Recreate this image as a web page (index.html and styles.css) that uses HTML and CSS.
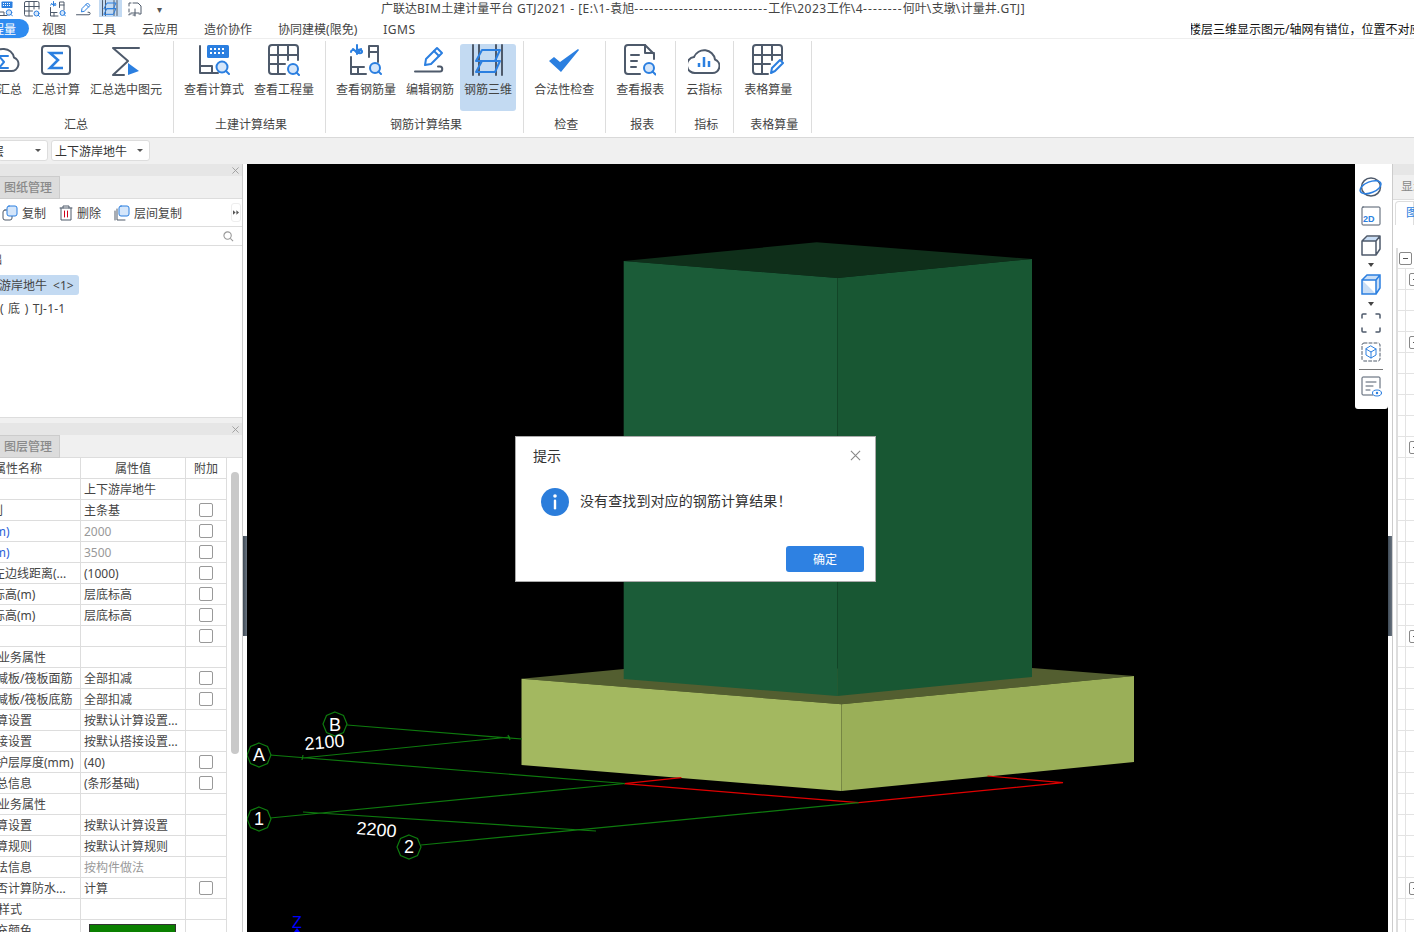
FILE: index.html
```html
<!DOCTYPE html>
<html lang="zh-CN">
<head>
<meta charset="utf-8">
<title>GTJ2021</title>
<link rel="stylesheet" href="styles.css">
</head>
<body>
<svg class="sprite" xmlns="http://www.w3.org/2000/svg">
  <symbol id="i-calc" viewBox="0 0 32 32"><path class="sl" d="M2 2V29H20M2 22H14V29"/><rect class="bf" x="9" y="1" width="22" height="13" rx="1.5"/><path class="dots" d="M12 5h16M12 9h16"/><circle class="lens" cx="24" cy="23" r="5.5"/><path class="bl" d="M28 27l3 3"/></symbol>
  <symbol id="i-qty" viewBox="0 0 32 32"><path class="sl" d="M17 30H4a3 3 0 0 1-3-3V4a3 3 0 0 1 3-3h23a3 3 0 0 1 3 3v12M1 11h29M1 20h16M10 1v29M20 1v15"/><circle class="lens" cx="25" cy="25" r="5"/><path class="bl" d="M28.500 28.500l2.500 2.500"/></symbol>
  <symbol id="i-rebar" viewBox="0 0 32 32"><path class="sl" d="M1 13v17h15M1 23h13M8 23v7M19 13V2h9v16M19 8h9"/><path class="bl" d="M1 8c0-3 5-2 5 0 0-3 5-3 6-1 1 3-5 3-5 0M7 1v9M3 5c4 4 6 4 8 0"/><circle class="lens" cx="25" cy="24" r="5"/><path class="bl" d="M28.500 27.500l2.500 2.500"/></symbol>
  <symbol id="i-edit" viewBox="0 0 32 32"><path class="bl" d="M11 21l1-6L23 4l5 5-11 11z"/><path class="bl" d="M20 7l5 5"/><path class="sl" d="M1 27.500H26c3 0 3-5 0-5h-2"/></symbol>
  <symbol id="i-3d" viewBox="0 0 32 32"><path class="sl" d="M1 1v30M7 1v30M24 1v30M30 1v30"/><path class="bl" d="M4 17L10 6H28L23 17ZM4 28L10 17H28L23 28Z"/></symbol>
</svg>

<header class="titlebar">
  <div class="qat">
    <svg class="qi qi-first"><use href="#i-calc"/></svg>
    <svg class="qi"><use href="#i-qty"/></svg>
    <svg class="qi"><use href="#i-rebar"/></svg>
    <svg class="qi"><use href="#i-edit"/></svg>
    <span class="qi-on"><svg class="qi"><use href="#i-3d"/></svg></span>
    <svg class="qi" viewBox="0 0 16 16"><path class="sl1" d="M1 5V2h2M1 8v3M1 14v-1h2M5 14h2M5 2h5l3 3v8h-2"/><path class="sl1" d="M3 12h8M7 8v7"/></svg>
    <span class="qat-more">▾</span>
  </div>
  <div class="app-title">广联达<span class="lat">BIM</span>土建计量平台<span class="lat"> GTJ2021 - [E:\1-</span>袁旭<span class="dash-run">---------------------------</span>工作<span class="lat">\2023</span>工作<span class="lat">\4</span><span class="dash-run">--------</span>何叶<span class="lat">\</span>支墩<span class="lat">\</span>计量井<span class="lat">.GTJ]</span></div>
</header>

<nav class="tabs">
  <span class="tab-on">工程量</span>
  <span>视图</span><span>工具</span><span>云应用</span><span>造价协作</span><span>协同建模(限免)</span><span class="lat">IGMS</span>
  <div class="notice"><span>楼层三维显示图元/轴网有错位，位置不对应</span></div>
</nav>

<section class="ribbon">
  <div class="group group-first">
    <div class="items">
      <div class="item"><svg class="ic" viewBox="0 0 32 32"><path class="sl" d="M8 27h15a7 7 0 0 0 3-13.500A11 11 0 0 0 5 12 8 8 0 0 0 8 27z"/><path class="bl" d="M20 12H11l5 6-5 6h9"/></svg><span>云汇总</span></div>
      <div class="item"><svg class="ic" viewBox="0 0 32 32"><rect class="sl" x="2" y="2" width="28" height="28" rx="3"/><path class="bl3" d="M23 9H10l8 7-8 8h13"/></svg><span>汇总计算</span></div>
      <div class="item"><svg class="ic" viewBox="0 0 32 32"><path class="sl" d="M29 4H3l15 13L3 31h11"/><path class="bf" d="M18 19L29 27 18 31z"/></svg><span>汇总选中图元</span></div>
    </div>
    <div class="g-label">汇总</div>
  </div>
  <div class="group">
    <div class="items">
      <div class="item"><svg class="ic"><use href="#i-calc"/></svg><span>查看计算式</span></div>
      <div class="item"><svg class="ic"><use href="#i-qty"/></svg><span>查看工程量</span></div>
    </div>
    <div class="g-label">土建计算结果</div>
  </div>
  <div class="group">
    <div class="items">
      <div class="item"><svg class="ic"><use href="#i-rebar"/></svg><span>查看钢筋量</span></div>
      <div class="item"><svg class="ic"><use href="#i-edit"/></svg><span>编辑钢筋</span></div>
      <div class="item item-on"><svg class="ic"><use href="#i-3d"/></svg><span>钢筋三维</span></div>
    </div>
    <div class="g-label">钢筋计算结果</div>
  </div>
  <div class="group">
    <div class="items">
      <div class="item"><svg class="ic" viewBox="0 0 32 32"><path class="bf" d="M1 17l5-4 6 5L30 5l1 1-18 22z"/></svg><span>合法性检查</span></div>
    </div>
    <div class="g-label">检查</div>
  </div>
  <div class="group">
    <div class="items">
      <div class="item"><svg class="ic" viewBox="0 0 32 32"><path class="sl" d="M16 30H4a3 3 0 0 1-3-3V4a3 3 0 0 1 3-3h17l9 9v5"/><path class="sl" d="M21 1v8h9M7 11h8M7 17h6M7 23h5"/><circle class="lens" cx="25" cy="24" r="5"/><path class="bl" d="M28.500 27.500l3 3"/></svg><span>查看报表</span></div>
    </div>
    <div class="g-label">报表</div>
  </div>
  <div class="group">
    <div class="items">
      <div class="item"><svg class="ic" viewBox="0 0 32 32"><path class="sl" d="M8 29h16a7 7 0 0 0 3-13.500A11 11 0 0 0 6 13 8 8 0 0 0 8 29z"/><path class="bl3" d="M11 23v-4M16 23V13M21 23v-6"/></svg><span>云指标</span></div>
    </div>
    <div class="g-label">指标</div>
  </div>
  <div class="group group-last">
    <div class="items">
      <div class="item"><svg class="ic" viewBox="0 0 32 32"><path class="sl" d="M16 30H4a3 3 0 0 1-3-3V4a3 3 0 0 1 3-3h23a3 3 0 0 1 3 3v12M1 11h29M1 20h17M10 1v29M20 1v15"/><path class="bl" d="M19 29l1-5 8-8 3 3-8 8z"/></svg><span>表格算量</span></div>
    </div>
    <div class="g-label">表格算量</div>
  </div>
</section>

<div class="combos">
  <div class="combo combo-a"><span>基础层</span><i class="caret"></i></div>
  <div class="combo combo-b"><span>上下游岸地牛</span><i class="caret"></i></div>
</div>

<main class="workspace">
  <aside class="left">
    <div class="panel panel-top">
      <div class="p-head"><svg class="p-x" viewBox="0 0 8 8"><path d="M.5.5l7 7M7.500.5l-7 7"/></svg></div>
      <div class="p-tabs"><span class="p-tab">图纸管理</span></div>
      <div class="p-tools">
        <span class="tool"><svg class="ti" viewBox="0 0 16 16"><rect class="sl1" x="1" y="5" width="9" height="10" rx="2"/><rect class="lb" x="5" y="1" width="10" height="10" rx="2"/></svg><span class="tool-t">复制</span></span>
        <span class="tool"><svg class="ti ti-trash" viewBox="0 0 14 16"><path class="sl1" d="M1 3h12M4 3V1h6v2M2 3v12h10V3"/><path class="red" d="M5.500 6v6M8.500 6v6"/></svg><span class="tool-t">删除</span></span>
        <span class="tool"><svg class="ti" viewBox="0 0 16 16"><path class="sl1" d="M3 4v11h8M1 6v9"/><rect class="lb" x="5" y="1" width="10" height="10" rx="2"/></svg><span class="tool-t">层间复制</span></span>
        <span class="more-btn"><svg class="more-ic" viewBox="0 0 8 6"><path d="M0 0l3.500 3L0 6zM4.500 0L8 3 4.500 6z"/></svg></span>
      </div>
      <div class="p-search"><svg class="search" viewBox="0 0 12 12"><circle cx="5" cy="5" r="4"/><path d="M8 8l3 3"/></svg></div>
      <div class="tree">
        <div class="t-row t-a">基础</div>
        <div class="t-row t-sel"><span>上下游岸地牛 &lt;1&gt;</span></div>
        <div class="t-row t-c">( 底 ) TJ-1-1</div>
      </div>
    </div>
    <div class="panel panel-bottom">
      <div class="p-head"><svg class="p-x" viewBox="0 0 8 8"><path d="M.5.5l7 7M7.500.5l-7 7"/></svg></div>
      <div class="p-tabs"><span class="p-tab">图层管理</span></div>
      <div class="prop-wrap">
        <div class="prop-clip">
          <table class="props">
            <colgroup><col class="c1"><col class="c2"><col class="c3"></colgroup>
            <thead><tr><th>属性名称</th><th>属性值</th><th>附加</th></tr></thead>
            <tbody>
              <tr><td class="p0">名称</td><td>上下游岸地牛</td><td></td></tr>
              <tr><td class="p23">类别</td><td>主条基</td><td><i class="cb"></i></td></tr>
              <tr><td class="p0 link">宽度(mm)</td><td class="gray">2000</td><td><i class="cb"></i></td></tr>
              <tr><td class="p0 link">高度(mm)</td><td class="gray">3500</td><td><i class="cb"></i></td></tr>
              <tr><td class="p1">轴线距左边线距离(...</td><td>(1000)</td><td><i class="cb"></i></td></tr>
              <tr><td class="p1">起点底标高(m)</td><td>层底标高</td><td><i class="cb"></i></td></tr>
              <tr><td class="p1">终点底标高(m)</td><td>层底标高</td><td><i class="cb"></i></td></tr>
              <tr><td class="p0">备注</td><td></td><td><i class="cb"></i></td></tr>
              <tr><td class="p18">钢筋业务属性</td><td></td><td></td></tr>
              <tr><td class="p28">扣减板/筏板面筋</td><td>全部扣减</td><td><i class="cb"></i></td></tr>
              <tr><td class="p28">扣减板/筏板底筋</td><td>全部扣减</td><td><i class="cb"></i></td></tr>
              <tr><td class="p28">计算设置</td><td>按默认计算设置...</td><td></td></tr>
              <tr><td class="p28">搭接设置</td><td>按默认搭接设置...</td><td></td></tr>
              <tr><td class="p28">保护层厚度(mm)</td><td>(40)</td><td><i class="cb"></i></td></tr>
              <tr><td class="p28">汇总信息</td><td>(条形基础)</td><td><i class="cb"></i></td></tr>
              <tr><td class="p18">土建业务属性</td><td></td><td></td></tr>
              <tr><td class="p28">计算设置</td><td>按默认计算设置</td><td></td></tr>
              <tr><td class="p28">计算规则</td><td>按默认计算规则</td><td></td></tr>
              <tr><td class="p28">做法信息</td><td class="gray">按构件做法</td><td></td></tr>
              <tr><td class="p28">是否计算防水...</td><td>计算</td><td><i class="cb"></i></td></tr>
              <tr><td class="p18">显示样式</td><td></td><td></td></tr>
              <tr><td class="p28">填充颜色</td><td class="swatch-cell"><i class="swatch"></i></td><td></td></tr>
            </tbody>
          </table>
        </div>
        <div class="scroll"><i class="thumb"></i></div>
      </div>
    </div>
  </aside>

  <div class="splitter"><i class="grip"></i></div>

  <div class="viewport">
    <svg class="scene" viewBox="247 164 1142 768" xmlns="http://www.w3.org/2000/svg">
      <polygon fill="#535e30" points="521.500,678.700 624,669 1032,668 1134,676 841.400,704.300"/>
      <polygon fill="#a3b860" points="521.500,678.700 841.400,704.300 841.400,791 521.500,765"/>
      <polygon fill="#9aaf58" points="841.400,704.300 1134,676 1134,762 841.400,791"/>
      <polygon fill="#0f2f1a" points="623.700,261 816.700,242.300 1032,259 837.300,278"/>
      <polygon fill="#1b5c38" points="623.700,261 837.300,278 837.300,696 623.700,679"/>
      <polygon fill="#185733" points="837.300,278 1032,259 1032,677 837.300,696"/>
      <g class="red-lines">
        <path d="M681.400 777.700L624 783.700 858.600 802.700 1063 782.700 987.500 776"/>
      </g>
      <g class="axis">
        <path d="M347 725L522 739M302 758L510 737M270 755L625 783.500M270 818L625 783.500M303 812L596 831M421 845L858.600 802.700"/>
        <path d="M508 735l2 5M303 755l-1 5"/>
        <polygon transform="translate(335 724)" points="0,-12 8.500,-8.500 12,0 8.500,8.500 0,12 -8.500,8.500 -12,0 -8.500,-8.500"/>
        <polygon transform="translate(259 755)" points="0,-12 8.500,-8.500 12,0 8.500,8.500 0,12 -8.500,8.500 -12,0 -8.500,-8.500"/>
        <polygon transform="translate(259 819)" points="0,-12 8.500,-8.500 12,0 8.500,8.500 0,12 -8.500,8.500 -12,0 -8.500,-8.500"/>
        <polygon transform="translate(409 847)" points="0,-12 8.500,-8.500 12,0 8.500,8.500 0,12 -8.500,8.500 -12,0 -8.500,-8.500"/>
      </g>
      <g class="labels">
        <text x="335" y="731" text-anchor="middle">B</text>
        <text x="259" y="761" text-anchor="middle">A</text>
        <text x="259" y="825" text-anchor="middle">1</text>
        <text x="409" y="853" text-anchor="middle">2</text>
        <text transform="translate(305 750) rotate(-5)">2100</text>
        <text transform="translate(356 834) rotate(5)">2200</text>
      </g>
      <text class="z" x="297" y="928" text-anchor="middle">Z</text>
      <polygon fill="#0000ff" points="297,928 300,932 294,932"/>
    </svg>

    <div class="viewbar">
      <svg class="vb vb-1" viewBox="0 0 24 20"><ellipse class="sl1-5" cx="12" cy="10" rx="9.500" ry="9"/><ellipse class="bl1-5" cx="11.500" cy="10" rx="11" ry="5.500" transform="rotate(-22 12 10)"/></svg>
      <svg class="vb vb-2" viewBox="0 0 20 20"><rect class="sl1" x="1" y="1" width="18" height="18" rx="1"/><text class="two-d" x="2" y="16">2D</text></svg>
      <svg class="vb vb-3" viewBox="0 0 20 22"><path fill="#c9def6" d="M2 7l4-4h12l-3 4z"/><path class="sl1-5" d="M1 7v14h14V7zM1 7l5-5h13v13l-4 6M15 7l4-5"/></svg>
      <i class="vcaret"></i>
      <svg class="vb vb-3" viewBox="0 0 20 22"><path fill="#c9def6" stroke="#2b7fe0" stroke-width="1.500" d="M1 7v14h14V7zM1 7l5-5h13v13l-4 6M15 7l4-5"/></svg>
      <i class="vcaret"></i>
      <svg class="vb vb-4" viewBox="0 0 20 20"><path class="sl1-5" d="M1 5V2a1 1 0 0 1 1-1h3M15 1h3a1 1 0 0 1 1 1v3M19 15v3a1 1 0 0 1-1 1h-3M5 19H2a1 1 0 0 1-1-1v-3"/></svg>
      <svg class="vb vb-5" viewBox="0 0 20 20"><rect class="dash" x="1" y="1" width="18" height="18" rx="2"/><path class="bl1" d="M10 4l5 3v6l-5 3-5-3V7zM5 7l5 3 5-3M10 10v6"/></svg>
      <i class="vsep"></i>
      <svg class="vb vb-6" viewBox="0 0 21 21"><path class="sl1" d="M12 19H2a1 1 0 0 1-1-1V2a1 1 0 0 1 1-1h16a1 1 0 0 1 1 1v10"/><path class="sl1" d="M5 6h10M5 10h7M5 14h4"/><ellipse class="bl1" cx="16" cy="17" rx="4.500" ry="3"/><circle fill="#2b7fe0" cx="16" cy="17" r="1.200"/></svg>
    </div>

    <div class="dialog">
      <div class="d-head"><span class="d-title">提示</span><svg class="d-close" viewBox="0 0 12 12"><path d="M1 1l10 10M11 1L1 11"/></svg></div>
      <div class="d-body">
        <svg class="d-icon" viewBox="0 0 28 28"><circle cx="14" cy="14" r="14" fill="#2b7ddb"/><circle cx="14" cy="8" r="1.800" fill="#fff"/><rect x="12.800" y="11.500" width="2.400" height="10" rx="1.200" fill="#fff"/></svg>
        <span>没有查找到对应的钢筋计算结果！</span>
      </div>
      <div class="d-foot"><span class="d-btn">确定</span></div>
    </div>
  </div>

  <div class="splitter splitter-r"><i class="grip"></i></div>

  <aside class="right">
    <div class="r-head"></div>
    <div class="r-tabs"><span>显示设置</span></div>
    <div class="r-sub"><span class="r-tab">图元显示</span></div>
    <div class="r-grid">
      <div class="r-row r-top"><i class="mbox"></i></div>
      <div class="r-row"><i class="mbox mbox-2"></i></div>
      <div class="r-row"></div><div class="r-row"></div>
      <div class="r-row"><i class="mbox mbox-2"></i></div>
      <div class="r-row"></div><div class="r-row"></div><div class="r-row"></div><div class="r-row"></div>
      <div class="r-row"><i class="mbox mbox-2"></i></div>
      <div class="r-row"></div><div class="r-row"></div><div class="r-row"></div><div class="r-row"></div>
      <div class="r-row"></div><div class="r-row"></div><div class="r-row"></div><div class="r-row"></div>
      <div class="r-row"><i class="mbox mbox-2"></i></div>
      <div class="r-row"></div><div class="r-row"></div><div class="r-row"></div><div class="r-row"></div><div class="r-row"></div>
      <div class="r-row"></div><div class="r-row"></div><div class="r-row"></div><div class="r-row"></div><div class="r-row"></div><div class="r-row"></div>
      <div class="r-row"><i class="mbox mbox-2"></i></div>
      <div class="r-row"></div><div class="r-row"></div><div class="r-row"></div>
    </div>
  </aside>
</main>
</body>
</html>
```

FILE: styles.css
```css
* { box-sizing: border-box; }
html, body { margin: 0; padding: 0; }
body {
  width: 1414px;
  height: 932px;
  overflow: hidden;
  background: #fff;
  color: #333;
  font: 12px/16px "Noto Sans", "Noto Sans CJK SC", sans-serif;
}
i { display: block; font-style: normal; }
.sprite { width: 0; height: 0; position: absolute; }

/* shared icon strokes */
.sl, .sl1, .sl1-5, .bl, .bl1, .bl1-5, .bl3, .lens, .red, .lb, .dash { fill: none; stroke-linecap: round; stroke-linejoin: round; }
.sl { stroke: #4e5a6b; stroke-width: 2; }
.sl1 { stroke: #4e5a6b; stroke-width: 1; }
.sl1-5 { stroke: #4e5a6b; stroke-width: 1.5; }
.bl { stroke: #2b7fe0; stroke-width: 2; }
.bl1 { stroke: #2b7fe0; stroke-width: 1; }
.bl1-5 { stroke: #2b7fe0; stroke-width: 1.5; }
.bl3 { stroke: #2b7fe0; stroke-width: 2.5; stroke-linecap: butt; stroke-linejoin: miter; }
.bf { fill: #2b7fe0; }
.lens { fill: #d5e6fa; stroke: #2b7fe0; stroke-width: 2; }
.dots { fill: none; stroke: #fff; stroke-width: 2; stroke-dasharray: 2 2; }
.red { stroke: #d0021b; stroke-width: 1; }
.lb { fill: #d5e6fa; stroke: #2b7fe0; stroke-width: 1; }
.dash { stroke: #4e5a6b; stroke-width: 1; stroke-dasharray: 3 2; }

/* title bar */
.titlebar { display: flex; height: 19px; align-items: flex-start; }
.qat { display: flex; width: 381px; height: 17px; align-items: center; }
.qi { width: 16px; height: 16px; flex: none; margin-right: 10px; }
.qi-first { margin-left: -3px; margin-right: 11px; }
.qi-on { display: flex; width: 23px; height: 17px; padding-left: 3px; margin-right: 6px; margin-left: -3px; background: #c3daf2; }
.qi-on .qi { margin: 0; }
.qat-more { margin-left: 3px; font-size: 10px; color: #555; }
.app-title { white-space: nowrap; line-height: 17px; color: #444; }
.lat { letter-spacing: .5px; }
.dash-run { letter-spacing: 1.1px; }

/* tabs */
.tabs { display: flex; align-items: center; gap: 26px; height: 20px; border-bottom: 1px solid #eee; color: #444; white-space: nowrap; }
.tabs > span { padding-top: 2px; }
.tabs > .tab-on { margin: 0 -13px 0 -40px; padding: 0 13px 0 20px; height: 19px; line-height: 21px; border-radius: 10px; background: #2e8bf0; color: #fff; }
.notice { position: absolute; left: 1191px; top: 22px; width: 223px; height: 16px; overflow: hidden; color: #111; }
.notice span { display: block; margin-left: -2px; }

/* ribbon */
.ribbon { display: flex; height: 99px; border-bottom: 1px solid #d9d9d9; padding-top: 2px; }
.group { display: flex; flex-direction: column; height: 92px; padding: 3px 11px 0 10px; border-right: 1px solid #ddd; flex: none; }
.group-first { margin-left: -24px; }
.group-last .items { margin-right: 8px; }
.items { display: flex; flex: none; gap: 10px; height: 67px; }
.item { display: flex; flex-direction: column; align-items: center; flex: none; }
.item .ic { width: 32px; height: 32px; flex: none; }
.item span { margin-top: 6px; white-space: nowrap; line-height: 16px; color: #444; }
.item-on { margin: 0 -4px; padding: 0 4px; border-radius: 3px; background: #c3daf2; }
.g-label { flex: none; margin-top: 6px; padding-left: 4px; text-align: center; color: #444; line-height: 16px; }

/* combo bar */
.combos { display: flex; gap: 3px; height: 26px; padding-top: 2px; background: #f0f0f0; }
.combo { display: flex; align-items: center; height: 21px; background: #fff; border: 1px solid #ddd; border-radius: 3px; color: #333; white-space: nowrap; }
.combo span { padding-top: 2px; }
.combo-a { width: 50px; margin-left: -2px; padding-right: 6px; overflow: hidden; }
.combo-a span { margin-left: -31px; margin-right: auto; }
.combo-b { width: 99px; padding: 0 6px 0 3px; justify-content: space-between; }
.caret { width: 0; height: 0; flex: none; border: 3px solid transparent; border-top: 3px solid #555; border-bottom: 0; }

/* workspace */
.workspace { display: flex; height: 768px; }
.left { width: 243px; flex: none; display: flex; flex-direction: column; border-right: 1px solid #ccc; background: #f0f0f0; overflow: hidden; }
.panel { background: #fff; }
.panel-top { height: 254px; border-bottom: 1px solid #ddd; }
.panel-bottom { margin-top: 5px; height: 509px; }
.p-head { display: flex; justify-content: flex-end; align-items: center; height: 12px; padding-right: 3px; background: #e6e6e6; }
.p-x { width: 7px; height: 7px; fill: none; stroke: #999; stroke-width: 1; }
.p-tabs { height: 23px; background: #f0f0f0; border-bottom: 1px solid #ddd; }
.p-tab { display: block; width: 60px; height: 23px; padding: 3px 0 0 4px; background: #dcdcdc; border: 1px solid #ccc; border-left: 0; color: #8a8a8a; font-weight: 500; }
.p-tools { display: flex; align-items: center; height: 28px; border-bottom: 1px solid #ddd; padding-left: 2px; color: #444; }
.tool { display: flex; align-items: center; margin-right: 13px; }
.tool-t { padding-top: 2px; }
.ti { width: 16px; height: 16px; margin-right: 4px; flex: none; }
.ti-trash { width: 14px; }
.more-btn { display: flex; align-items: center; justify-content: center; margin-left: auto; margin-right: 1px; width: 10px; height: 19px; border: 1px solid #eee; border-radius: 3px; }
.more-ic { width: 6px; height: 5px; fill: #555; }
.p-search { display: flex; justify-content: flex-end; align-items: center; height: 19px; padding-right: 8px; border-bottom: 1px solid #ddd; }
.search { width: 11px; height: 11px; fill: none; stroke: #999; stroke-width: 1.200; }
.tree { padding-top: 4px; color: #444; }
.t-row { height: 24px; line-height: 20px; white-space: nowrap; }
.t-a { margin-left: -22px; height: 25px; }
.t-sel { width: 79px; height: 20px; margin-bottom: 4px; overflow: hidden; background: #c3daf2; border-radius: 0 3px 3px 0; line-height: 22px; }
.t-sel span { display: block; margin-left: -25px; word-spacing: 3px; }
.t-c { word-spacing: 1px; letter-spacing: .2px; }

.prop-wrap { display: flex; height: 474px; }
.prop-clip { width: 227px; flex: none; overflow: hidden; }
.props { margin-left: -44px; width: 271px; table-layout: fixed; border-collapse: separate; border-spacing: 0; color: #444; }
.c1 { width: 125px; } .c2 { width: 105px; } .c3 { width: 41px; }
.props th, .props td { height: 21px; padding: 2px 0 0 3px; border-right: 1px solid #ddd; border-bottom: 1px solid #ddd; font-weight: 400; white-space: nowrap; overflow: hidden; line-height: 18px; }
.props th { text-align: center; padding: 2px 0 0; }
.props td:last-child { padding: 0; }
.props td.p0 { padding-left: 0; }
.props td.p1 { padding-left: 1px; }
.props td.p18 { padding-left: 18px; }
.props td.p23 { padding-left: 23px; }
.props td.p28 { padding-left: 28px; }
.link { color: #2b5fd9; }
.props .gray { color: #999; }
.cb { width: 14px; height: 14px; margin: 0 auto; border: 1px solid #999; border-radius: 2px; background: #fff; }
.props td.swatch-cell { padding: 4px 9px 0 8px; vertical-align: top; }
.swatch { height: 16px; background: #0a8000; border: 1px solid #333; }
.scroll { flex: 1; padding: 14px 3px 0 4px; }
.thumb { height: 282px; background: #c9c9c9; border-radius: 4px; }

/* splitters */
.splitter { width: 4px; flex: none; padding-top: 372px; background: #fff; }
.grip { height: 100px; background: linear-gradient(90deg, #3f4b57, #6a7480); }
.splitter-r { width: 4px; }

/* 3D view */
.viewport { position: relative; width: 1141px; flex: none; background: #000; overflow: visible; }
.scene { display: block; width: 1142px; height: 768px; }
.red-lines path { fill: none; stroke: #e00000; stroke-width: 1.2; }
.axis path, .axis polygon { fill: none; stroke: #0e7a0e; stroke-width: 1.2; }
.labels text { fill: #fff; font: 18px "Liberation Sans", sans-serif; }
.z { fill: #0000ff; font: 16px "Liberation Sans", sans-serif; }

.viewbar { position: absolute; left: 1108px; top: 0; width: 33px; height: 245px; display: flex; flex-direction: column; align-items: center; padding: 13px 1px 0 0; background: #fff; border-radius: 0 0 3px 3px; }
.vb { flex: none; display: block; }
.vb-1 { width: 24px; height: 20px; }
.vb-2 { width: 20px; height: 20px; margin-top: 9px; }
.vb-3 { width: 20px; height: 22px; margin-top: 8px; }
.vb-4 { width: 20px; height: 20px; margin-top: 9px; }
.vb-5 { width: 20px; height: 20px; margin-top: 9px; }
.vb-6 { width: 21px; height: 21px; margin-top: 6px; }
.vcaret { width: 0; height: 0; margin-top: 7px; border: 3px solid transparent; border-top: 4px solid #444; border-bottom: 0; }
.vcaret + .vb-3 { margin-top: 6px; }
.vcaret + .vb-4 { margin-top: 7px; }
.vsep { width: 24px; height: 1px; margin-top: 7px; background: #777; }
.two-d { fill: #2b7fe0; font: 700 9px "Liberation Sans", sans-serif; }

/* dialog */
.dialog { position: absolute; left: 268px; top: 272px; width: 361px; height: 146px; background: #fff; border: 1px solid #aaa; display: flex; flex-direction: column; color: #333; }
.d-head { display: flex; justify-content: space-between; align-items: center; height: 36px; padding: 0 14px 0 17px; font-size: 14px; }
.d-title { padding-top: 2px; }
.d-close { width: 11px; height: 11px; fill: none; stroke: #888; stroke-width: 1.200; }
.d-body { display: flex; align-items: center; gap: 11px; height: 28px; margin-top: 15px; padding-left: 25px; font-size: 14px; letter-spacing: .1px; }
.d-body span { padding-bottom: 2px; }
.d-icon { width: 28px; height: 28px; flex: none; }
.d-foot { display: flex; justify-content: flex-end; margin-top: 30px; padding-right: 11px; }
.d-btn { display: block; width: 78px; height: 26px; line-height: 27px; text-align: center; color: #fff; background: #2e81e2; border-radius: 3px; }

/* right panel */
.right { flex: 1; min-width: 0; border-left: 1px solid #ccc; background: #fff; overflow: hidden; white-space: nowrap; }
.r-head { height: 11px; background: #e6e6e6; }
.r-tabs { height: 25px; padding: 4px 0 0 8px; background: #f0f0f0; color: #888; border-bottom: 1px solid #ddd; }
.r-sub { height: 48px; padding: 1px 0 0 2px; }
.r-tab { display: block; height: 24px; padding: 3px 0 0 10px; color: #2b7fe0; border: 1px solid #ddd; border-bottom: 0; border-radius: 4px 0 0 0; }
.r-grid { margin-left: 3px; border-left: 2px solid #ddd; }
.r-row { position: relative; height: 21px; border-bottom: 1px solid #e3e3e3; background: linear-gradient(#e3e3e3, #e3e3e3) 7px 0 / 1px 100% no-repeat; }
.r-top { background: none; }
.mbox { position: absolute; left: 1px; top: 4px; width: 13px; height: 13px; background: #fff; border: 1px solid #888; border-radius: 2px; }
.mbox::after { content: ""; position: absolute; left: 3px; top: 5px; width: 5px; height: 1px; background: #555; }
.mbox-2 { left: 11px; }
```
